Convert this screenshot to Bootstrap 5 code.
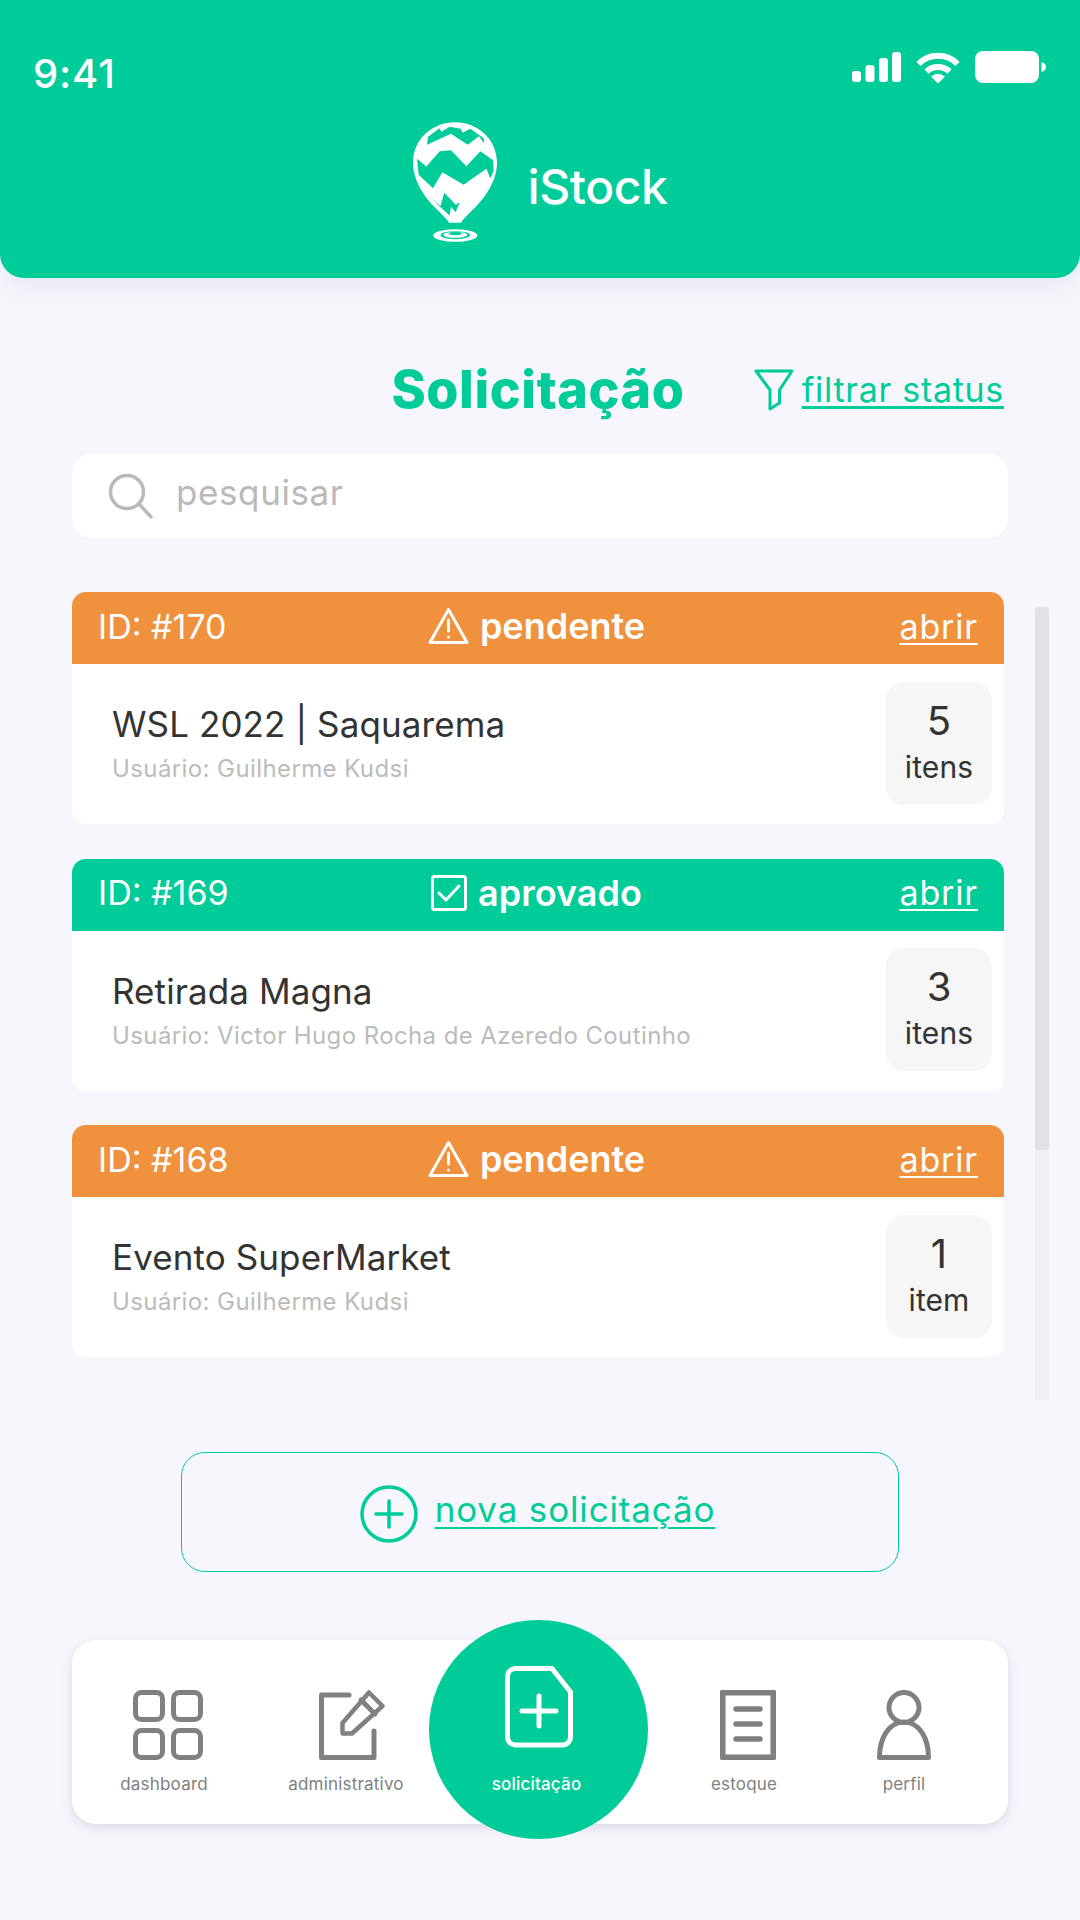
<!DOCTYPE html>
<html lang="pt-BR">
<head>
<meta charset="utf-8">
<title>iStock</title>
<link href="https://cdn.jsdelivr.net/npm/bootstrap@5.3.0/dist/css/bootstrap.min.css" rel="stylesheet">
<style>
body{background:#f6f6fc;font-family:"Inter","Open Sans",sans-serif;width:1080px;height:1920px;overflow:hidden;color:#333}
a{color:inherit}
.app-head{height:278px;background:#00cc99;border-radius:0 0 24px 24px;box-shadow:0 10px 30px rgba(60,60,110,.07);color:#fff;padding:51px 34px 0 33px}
.clock{font-size:40px;line-height:44px;margin-top:1px;letter-spacing:.9px;font-weight:500}
.stat-icons{gap:15px;height:32px}
.brand-row{margin-top:26px;gap:30px;padding-left:2px}
.brand-name{font-size:48px;font-weight:500;letter-spacing:-.4px;line-height:60px;margin-top:35px}
.page-main{padding:82px 72px 0}
.title-row{display:grid;grid-template-columns:1fr auto 1fr;width:932px;height:60px;align-items:center}
.page-title{grid-column:2;font-size:52px;font-weight:800;color:#00cc99;margin:0;letter-spacing:.6px;line-height:60px}
.filter-link{grid-column:3;justify-self:end;color:#00cc99;font-size:34px;gap:8px;white-space:nowrap;letter-spacing:.7px;text-underline-offset:4px;text-decoration-thickness:2px}
.filter-link span{margin-bottom:2px}
.search-box{width:936px;height:84px;background:#fff;border-radius:20px;margin-top:34px;padding-left:36px;gap:22px;color:#b9b9b9;font-size:35px;letter-spacing:.6px}
.search-box span{margin-bottom:7px}
.scroll-zone{margin-top:54px;gap:31px;width:1000px}
.req-list{width:932px;gap:34.5px;flex:none}
.req-card{height:232px;border-radius:14px;overflow:hidden}
.req-head{display:grid;grid-template-columns:1fr auto 1fr;align-items:center;height:72px;padding:0 26px 4px;color:#fff;font-size:34px;border:0;border-radius:0}
.tone-warn{background:#ef913d}
.tone-ok{background:#00cc99}
.req-state{font-weight:600;gap:11px;font-size:36px;margin-left:-3px}
.req-open{justify-self:end;text-underline-offset:4px;text-decoration-thickness:2px;letter-spacing:.85px}
.req-body{height:160px;padding:17px 12px 19px 40px}
.req-title{font-size:35px;line-height:44px;color:#333;letter-spacing:.1px}
.req-user{font-size:24px;line-height:30px;color:#bbb;margin-top:8px;letter-spacing:.4px}
.qty-box{width:106px;height:123px;background:#f6f6f6;border-radius:18px;padding-top:16px;color:#333;flex:none}
.qty-num{font-size:40px;line-height:46px}
.qty-word{font-size:30px;line-height:36px;margin-top:5px;letter-spacing:.1px}
.scroll-rail{width:14px;height:793px;margin-top:15px;background:#efeff5;border-radius:3px 3px 0 0;overflow:hidden;flex:none}
.scroll-thumb{height:543px;background:#e1e1e8}
.new-btn{width:718px;height:120px;margin:52px 0 0 109px;padding:0 5px 0 0;border:1px solid #00cc99;border-radius:24px;color:#00cc99;font-size:35px;gap:17px;letter-spacing:.85px}
.new-btn:hover{color:#00cc99;background:transparent;border-color:#00cc99}
.new-btn svg{margin-top:4px}
.new-btn span{text-decoration:underline;text-underline-offset:5px;text-decoration-thickness:2px;margin-bottom:6px}
.tab-bar{width:936px;height:184px;margin-top:68px;background:#fff;border-radius:24px;box-shadow:0 4px 12px rgba(60,60,90,.14);align-items:flex-start}
.tab-item{padding-top:50px;height:184px;color:#808080;font-size:17px;line-height:22px;text-decoration:none;flex:none;letter-spacing:.2px}
.tab-item svg{display:block}
.tab-item div{height:70px;display:flex;align-items:flex-start;justify-content:center}
.tab-item p{margin:13px 0 0;text-align:center;white-space:nowrap}
.w-dash{width:184px}.w-admin{width:180px}.w-stock{width:192px}.w-user{width:128px}
.w-dash svg,.w-stock svg{margin-left:8px}
.w-admin svg{margin-left:12px}
.tab-main{width:219px;height:219px;margin:-20px 0 -15px -7px;background:#00cc99;border-radius:50%;color:#fff;padding-top:46px;font-weight:500;position:relative}
.tab-main div{height:82px}
.tab-main p{margin:25px 4px 0 0}
</style>
</head>
<body>
<header class="app-head">
  <div class="d-flex justify-content-between align-items-start">
    <div class="clock">9:41</div>
    <div class="d-flex stat-icons align-items-center">
      <svg width="49" height="32" viewBox="0 0 49 32" fill="#fff"><rect y="20" width="9" height="11" rx="3"/><rect x="13.500" y="14" width="9" height="17" rx="3"/><rect x="27" y="7" width="9" height="24" rx="3"/><rect x="40" y="1" width="9" height="30" rx="3"/></svg>
      <svg width="44" height="32" viewBox="0 0 44 32" fill="none" stroke="#fff" stroke-width="6"><path d="M2.500 13C13 2 31 2 41.500 13"/><path d="M10.500 20.500C17 14.500 27 14.500 33.500 20.500"/><path d="M15 25.500Q22 20 29 25.500L22 32.500Z" fill="#fff" stroke="none"/></svg>
      <svg width="71" height="32" viewBox="0 0 71 32" fill="#fff"><rect width="64" height="32" rx="8"/><path d="M66.500 11c3 .8 4.500 2.500 4.500 5s-1.500 4.200-4.500 5z"/></svg>
    </div>
  </div>
  <div class="d-flex justify-content-center brand-row">
    <svg width="84" height="121" viewBox="98 68 252 362">
      <path d="M224 68C160 68 98 115 98 190c0 50 32 100 62 130 22 22 38 35 46 50h36c8-15 24-28 46-50 30-30 62-80 62-130C350 115 288 68 224 68Z" fill="#fff"/>
      <path d="M140 136L143 112 178 86 183 97 208 82 242 88 246 100 270 88 310 116 312 132 296 110 262 136 212 103Z" fill="#00cc99"/>
      <path d="M110 178L138 201 178 155 212 152 258 200 300 155 338 182 340 214 330 236 318 208 250 256 186 218 158 266 115 226Z" fill="#00cc99"/>
      <path d="M150 290L165 306 180 320 192 280 226 316 238 308 226 338 212 322 208 348 172 316Z" fill="#00cc99"/>
      <ellipse cx="225" cy="408" rx="66" ry="19" fill="#fff"/>
      <ellipse cx="225" cy="407" rx="44" ry="12" fill="#00cc99"/>
      <ellipse cx="225" cy="406" rx="36" ry="9" fill="#fff"/>
      <ellipse cx="225" cy="402" rx="20" ry="5" fill="#00cc99"/>
    </svg>
    <div class="brand-name">iStock</div>
  </div>
</header>

<main class="page-main">
  <div class="title-row">
    <h1 class="page-title">Solicitação</h1>
    <a href="#" class="filter-link d-flex align-items-center">
      <svg width="40" height="42" viewBox="0 0 40 42" fill="none" stroke="#00cc99" stroke-width="3" stroke-linejoin="round"><path d="M2 2H38L25.500 21V34L16 40V21Z"/></svg>
      <span class="text-decoration-underline">filtrar status</span>
    </a>
  </div>

  <div class="search-box d-flex align-items-center">
    <svg width="46" height="46" viewBox="0 0 46 46" fill="none" stroke="#b9b9b9" stroke-width="3.500"><circle cx="19" cy="19" r="16.500"/><path d="M31 31L44 45"/></svg>
    <span>pesquisar</span>
  </div>

  <div class="scroll-zone d-flex align-items-start">
    <div class="req-list d-flex flex-column">

      <article class="card req-card border-0">
        <div class="req-head tone-warn">
          <span>ID: #170</span>
          <span class="req-state d-flex align-items-center">
            <svg width="41" height="38" viewBox="0 0 41 38" fill="none" stroke="#fff" stroke-width="3" stroke-linejoin="round" stroke-linecap="round"><path d="M20.500 2.500L39 35.500H2Z"/><path d="M20.500 13V24"/><path d="M20.500 30v.1"/></svg>
            pendente
          </span>
          <a href="#" class="req-open">abrir</a>
        </div>
        <div class="req-body d-flex justify-content-between align-items-center">
          <div>
            <div class="req-title">WSL 2022 | Saquarema</div>
            <div class="req-user">Usuário: Guilherme Kudsi</div>
          </div>
          <div class="qty-box text-center"><div class="qty-num">5</div><div class="qty-word">itens</div></div>
        </div>
      </article>

      <article class="card req-card border-0">
        <div class="req-head tone-ok">
          <span>ID: #169</span>
          <span class="req-state d-flex align-items-center">
            <svg width="36" height="36" viewBox="0 0 36 36" fill="none" stroke="#fff" stroke-width="3" stroke-linejoin="round" stroke-linecap="round"><rect x="1.500" y="1.500" width="33" height="33" rx="2"/><path d="M8 18L15 25L28 11"/></svg>
            aprovado
          </span>
          <a href="#" class="req-open">abrir</a>
        </div>
        <div class="req-body d-flex justify-content-between align-items-center">
          <div>
            <div class="req-title">Retirada Magna</div>
            <div class="req-user">Usuário: Victor Hugo Rocha de Azeredo Coutinho</div>
          </div>
          <div class="qty-box text-center"><div class="qty-num">3</div><div class="qty-word">itens</div></div>
        </div>
      </article>

      <article class="card req-card border-0">
        <div class="req-head tone-warn">
          <span>ID: #168</span>
          <span class="req-state d-flex align-items-center">
            <svg width="41" height="38" viewBox="0 0 41 38" fill="none" stroke="#fff" stroke-width="3" stroke-linejoin="round" stroke-linecap="round"><path d="M20.500 2.500L39 35.500H2Z"/><path d="M20.500 13V24"/><path d="M20.500 30v.1"/></svg>
            pendente
          </span>
          <a href="#" class="req-open">abrir</a>
        </div>
        <div class="req-body d-flex justify-content-between align-items-center">
          <div>
            <div class="req-title">Evento SuperMarket</div>
            <div class="req-user">Usuário: Guilherme Kudsi</div>
          </div>
          <div class="qty-box text-center"><div class="qty-num">1</div><div class="qty-word">item</div></div>
        </div>
      </article>

    </div>
    <div class="scroll-rail"><div class="scroll-thumb"></div></div>
  </div>

  <a href="#" class="btn new-btn d-flex align-items-center justify-content-center">
    <svg width="58" height="58" viewBox="0 0 58 58" fill="none" stroke="#00cc99" stroke-width="3.500" stroke-linecap="round"><circle cx="29" cy="29" r="27"/><path d="M29 16V42M16 29H42"/></svg>
    <span>nova solicitação</span>
  </a>

  <nav class="tab-bar d-flex">
    <a href="#" class="tab-item w-dash">
      <div><svg width="70" height="70" viewBox="0 0 70 70" fill="none" stroke="#808080" stroke-width="5"><rect x="2.500" y="2.500" width="27" height="27" rx="6"/><rect x="40.500" y="2.500" width="27" height="27" rx="6"/><rect x="2.500" y="40.500" width="27" height="27" rx="6"/><rect x="40.500" y="40.500" width="27" height="27" rx="6"/></svg></div>
      <p>dashboard</p>
    </a>
    <a href="#" class="tab-item w-admin">
      <div><svg width="66" height="70" viewBox="0 0 66 70" fill="none" stroke="#808080" stroke-width="5" stroke-linejoin="round" stroke-linecap="round"><path d="M30 5H2.500V67.500H55V41"/><path d="M50 2.500L63.500 16 33 43.500H23.500V33Z" stroke-width="4.500"/><path d="M42 10L56 24"/></svg></div>
      <p>administrativo</p>
    </a>
    <a href="#" class="tab-item tab-main text-white">
      <div><svg width="68" height="82" viewBox="0 0 68 82" fill="none" stroke="#fff" stroke-width="5" stroke-linecap="round" stroke-linejoin="round"><path d="M10 2.500H47L65.500 26V71A8 8 0 0 1 57.500 79H10A8 8 0 0 1 2.500 71V10A8 8 0 0 1 10 2.500Z"/><path d="M34 30V60M17 45H51" stroke-width="5"/></svg></div>
      <p>solicitação</p>
    </a>
    <a href="#" class="tab-item w-stock">
      <div><svg width="56" height="70" viewBox="0 0 56 70" fill="none" stroke="#808080"><rect x="2.500" y="2.500" width="51" height="65" rx="1" stroke-width="6"/><path d="M16 19H40M16 34H40M16 49H40" stroke-width="5.500" stroke-linecap="round"/></svg></div>
      <p>estoque</p>
    </a>
    <a href="#" class="tab-item w-user">
      <div><svg width="54" height="70" viewBox="0 0 54 70" fill="none" stroke="#808080" stroke-width="5" stroke-linejoin="round"><circle cx="27" cy="17.500" r="15"/><path d="M2.500 67.500C2.500 48 12 32 27 32S51.500 48 51.500 67.500Z"/></svg></div>
      <p>perfil</p>
    </a>
  </nav>
</main>
<script src="https://cdn.jsdelivr.net/npm/bootstrap@5.3.0/dist/js/bootstrap.bundle.min.js"></script>
</body>
</html>
